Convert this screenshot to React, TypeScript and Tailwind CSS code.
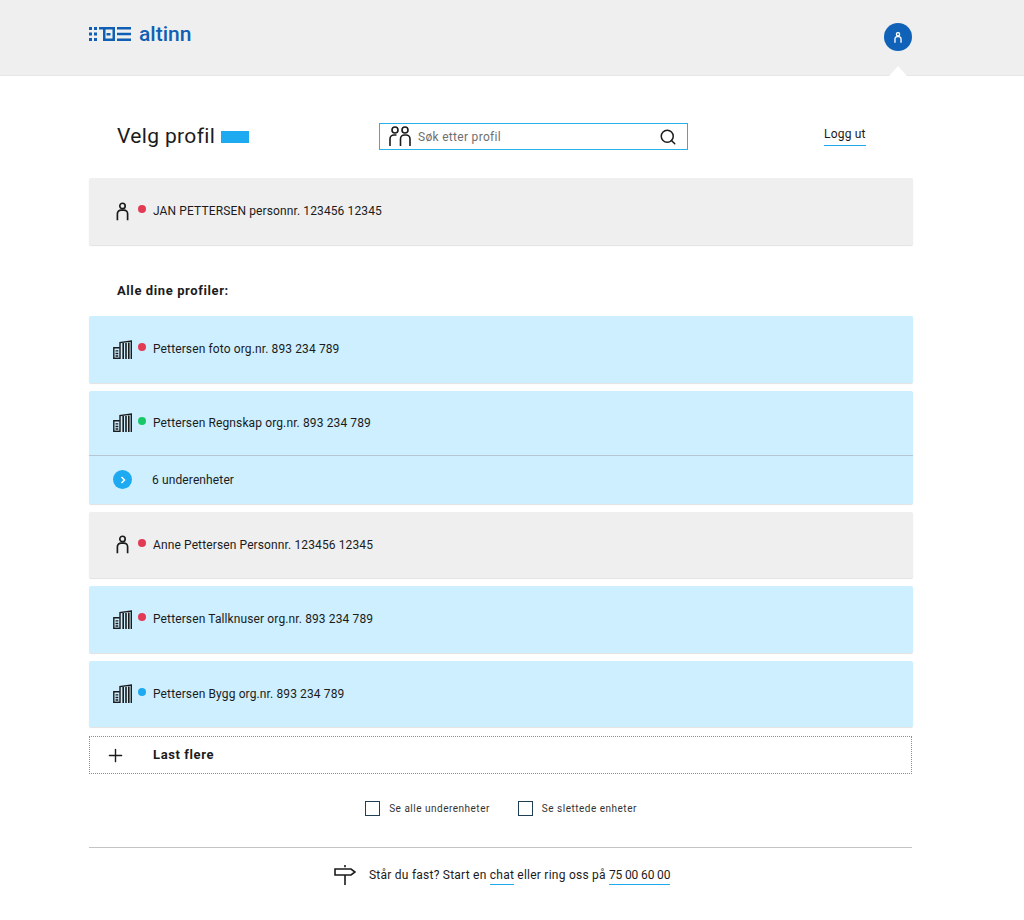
import { Plus, Search } from "lucide-react"

function PersonIcon({ className = "", width = 1.8 }: { className?: string; width?: number }) {
  return (
    <svg viewBox="0 0 14 20" className={className} fill="none" stroke="currentColor" strokeWidth={width}>
      <circle cx="7" cy="4" r="2.9" />
      <path d="M1.5 19.5V12.500a4 4 0 0 1 4-4h3a4 4 0 0 1 4 4v7" />
    </svg>
  )
}

function GroupIcon() {
  return (
    <svg viewBox="0 0 22 21" className="h-[21px] w-[22px] text-[#1b1b1b]" fill="none" stroke="currentColor" strokeWidth="1.6">
      <circle cx="6" cy="4" r="3" />
      <circle cx="16" cy="4" r="3" />
      <path d="M1 20v-7a4 4 0 0 1 4-4h2.500" />
      <path d="M11.500 20v-7a4 4 0 0 1 4-4h1.500a4 4 0 0 1 4 4v7" />
    </svg>
  )
}

function BuildingIcon() {
  return (
    <svg viewBox="0 0 19 19" className="h-[19px] w-[19px] shrink-0 text-[#1b1b1b]" fill="none" stroke="currentColor">
      <path d="M.8 19V7.800h6" strokeWidth="1.4" />
      <path d="M7 19V2.500L18.300 1v18" strokeWidth="1.4" />
      <path d="M.8 18.300h6.200" strokeWidth="1.4" />
      <path d="M10.200 3v16M13 3v16M15.800 2.500V19" strokeWidth="1.6" />
      <path d="M2.500 10.800h2.800M2.500 13.500h2.800M2.500 16h2.800" strokeWidth="1.300" />
    </svg>
  )
}

function Logo() {
  return (
    <svg viewBox="0 0 42 16" className="h-4 w-[42px] text-[#0f5fb4]" fill="currentColor">
      <path d="M0 1h3v3H0zM5 1h3v3H5zM0 6.500h3v3H0zM5 6.500h3v3H5zM0 12h3v3H0zM5 12h3v3H5z" />
      <path d="M10 1h16v14H14v-2.500h9.500v-9H16.500V15H14V3.500h-4z" />
      <path d="M17.500 7h4v2.500h-4z" />
      <path d="M28 1h14v2.500H28zM28 6.700h14v2.500H28zM28 12.500h14V15H28z" />
    </svg>
  )
}

function Signpost() {
  return (
    <svg viewBox="0 0 22 20" className="h-5 w-[22px] text-[#1b1b1b]" fill="none" stroke="currentColor" strokeWidth="1.6">
      <path d="M11 0v2.200M11 10v10" />
      <path d="M1 4h16l4 3-4 3H1z" />
    </svg>
  )
}

type Kind = "person" | "org"

function RowHead({ kind, dot }: { kind: Kind; dot: string }) {
  return (
    <>
      <div className="flex w-[18px] justify-center">
        {kind === "person" ? <PersonIcon className="h-[19px] w-[13px] text-[#1b1b1b]" /> : <BuildingIcon />}
      </div>
      <span className={`mb-1 ml-[7px] mr-[7px] h-2 w-2 rounded-full ${dot}`} />
    </>
  )
}

function ProfileRow({ kind, dot, children }: { kind: Kind; dot: string; children: React.ReactNode }) {
  const bg = kind === "person" ? "bg-[#efefef]" : "bg-[#cdefff]"
  return (
    <div className={`flex h-[66.5px] items-center rounded-[2px] pl-6 text-[12px] tracking-[0.12px] text-[#1b1b1b] shadow-[0_1px_1px_rgba(0,0,0,0.12)] ${bg}`}>
      <RowHead kind={kind} dot={dot} />
      <span>{children}</span>
    </div>
  )
}

export default function App() {
  return (
    <div className="h-[920px] bg-white font-['Roboto',sans-serif] text-[#1b1b1b]">
      <header className="relative h-[76px] border-b border-[#e6e6e6] bg-[#efefef]">
        <div className="ml-[89px] flex w-[824px] items-start justify-between">
          <div className="mt-[25px] flex items-center gap-[8px] text-[#0f5fb4]">
            <Logo />
            <span className="text-[21px] font-medium leading-[18px]">altinn</span>
          </div>
          <div className="mr-[1px] mt-[23px] flex h-7 w-7 items-center justify-center rounded-full bg-[#0f62b8] text-white">
            <PersonIcon className="h-[11px] w-2" width={2.4} />
          </div>
        </div>
        <div className="absolute left-[889px] top-[66px] h-0 w-0 border-x-[9px] border-b-[10px] border-x-transparent border-b-white" />
      </header>

      <main className="ml-[89px] w-[824px]">
        <div className="mt-[47px] flex h-[27px] items-center pl-7">
          <div className="flex w-[262px] items-center">
            <h1 className="text-[21px] leading-none tracking-[0.35px]">Velg profil</h1>
            <span className="ml-[6px] h-[12px] w-[28px] bg-[#1eaaf1]" />
          </div>
          <div className="flex h-[27px] w-[309px] items-center border border-[#2ab0e8] pl-[9px] pr-[10px]">
            <GroupIcon />
            <span className="ml-[7px] flex-1 text-[12px] tracking-[0.3px] text-[#6f6f6f]">Søk etter profil</span>
            <Search className="h-[18px] w-[18px]" strokeWidth={2} />
          </div>
          <a className="mb-[2px] ml-[136px] border-b border-[#1eaaf1] pb-[2px] text-[12px] tracking-[0.2px]">Logg ut</a>
        </div>

        <div className="mt-[28px]">
          <ProfileRow kind="person" dot="bg-[#e23b53]">JAN PETTERSEN personnr. 123456 12345</ProfileRow>
        </div>

        <h2 className="mb-[16.5px] mt-[37px] pl-7 text-[13px] font-bold leading-[18px] tracking-[0.6px]">Alle dine profiler:</h2>

        <div className="flex flex-col gap-2">
          <ProfileRow kind="org" dot="bg-[#e23b53]">Pettersen foto org.nr. 893 234 789</ProfileRow>
          <div className="rounded-[2px] bg-[#cdefff] shadow-[0_1px_1px_rgba(0,0,0,0.12)]">
            <div className="flex h-[65px] items-center border-b border-[#b5c7d2] pl-6 text-[12px] tracking-[0.12px]">
              <RowHead kind="org" dot="bg-[#19c769]" />
              <span>Pettersen Regnskap org.nr. 893 234 789</span>
            </div>
            <div className="flex h-[48px] items-center pl-6 text-[12px] tracking-[0.12px]">
              <span className="flex h-[19px] w-[19px] items-center justify-center rounded-full bg-[#1eaaf1]">
                <svg viewBox="0 0 8 8" className="h-2 w-2 text-white" fill="none" stroke="currentColor" strokeWidth="1.500">
                  <path d="M2.500 1l3 3-3 3" />
                </svg>
              </span>
              <span className="ml-5">6 underenheter</span>
            </div>
          </div>
          <ProfileRow kind="person" dot="bg-[#e23b53]">Anne Pettersen Personnr. 123456 12345</ProfileRow>
          <ProfileRow kind="org" dot="bg-[#e23b53]">Pettersen Tallknuser org.nr. 893 234 789</ProfileRow>
          <ProfileRow kind="org" dot="bg-[#1eaaf1]">Pettersen Bygg org.nr. 893 234 789</ProfileRow>
        </div>

        <div className="mt-[9px] flex h-[38px] w-[823px] items-center border border-dotted border-[#2ab0e8] pl-[15px]">
          <Plus className="h-[21px] w-[21px]" strokeWidth={1.600} />
          <span className="ml-[27px] text-[13px] font-bold tracking-[0.6px]">Last flere</span>
        </div>

        <div className="mt-[27px] flex items-center justify-center text-[10px] tracking-[0.5px] text-[#333]">
          <span className="h-[15px] w-[15px] border border-[#1f3f55]" />
          <span className="ml-[9px]">Se alle underenheter</span>
          <span className="ml-[28px] h-[15px] w-[15px] border border-[#1f3f55]" />
          <span className="ml-[9px]">Se slettede enheter</span>
        </div>

        <div className="mt-[31px] h-[1px] w-[823px] bg-[#c4c4c4]" />

        <div className="mt-[17px] flex items-center pl-[245px] text-[12px] tracking-[0.24px]">
          <Signpost />
          <p className="ml-[13px]">
            Står du fast? Start en <a className="border-b border-[#1eaaf1] pb-[2px]">chat</a> eller ring oss på{" "}
            <a className="border-b border-[#1eaaf1] pb-[2px] tracking-[-0.15px]">75 00 60 00</a>
          </p>
        </div>
      </main>
    </div>
  )
}
